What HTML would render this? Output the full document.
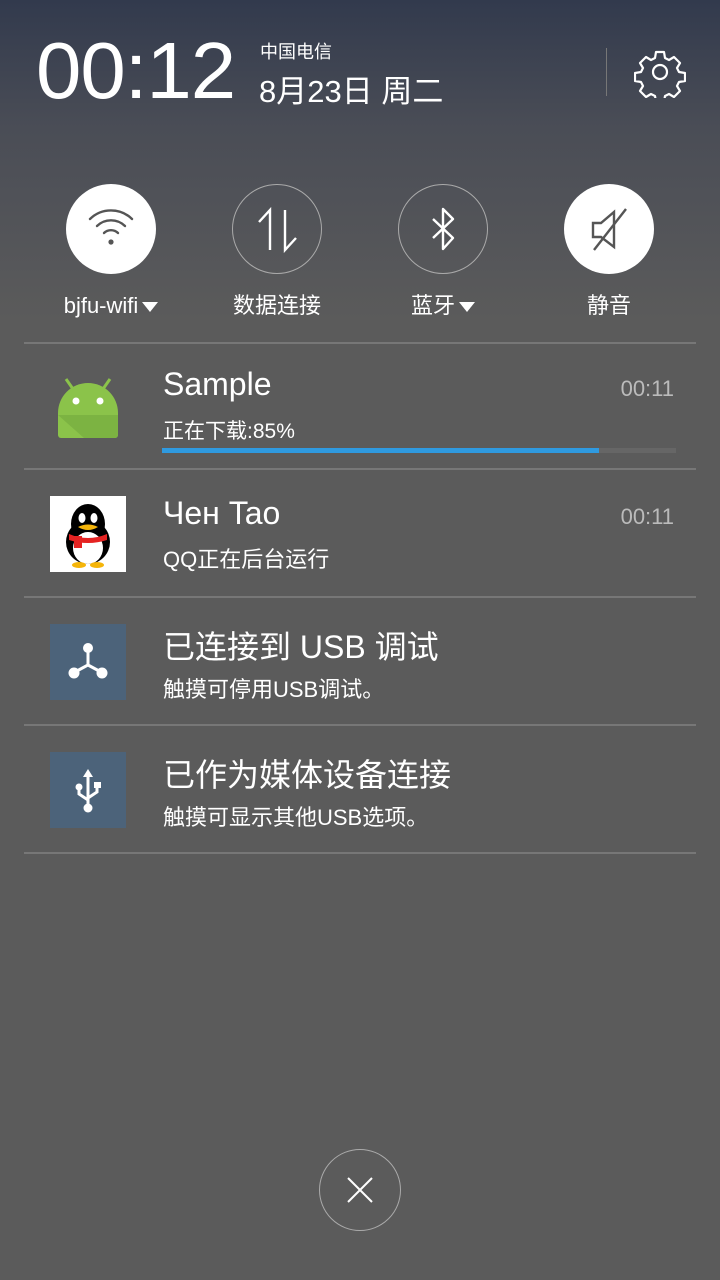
<!DOCTYPE html>
<html><head><meta charset="utf-8"><style>
*{margin:0;padding:0;box-sizing:border-box}
body{width:720px;height:1280px;overflow:hidden;background:#5b5b5b;font-family:"Liberation Sans","Noto Sans CJK SC",sans-serif;color:#fff;position:relative}
.bg{position:absolute;left:0;top:0;width:720px;height:320px;background:linear-gradient(#323a4d 0%,#4a4d56 40%,#5b5b5b 100%)}
.a{position:absolute;white-space:nowrap}
.hr{position:absolute;left:24px;width:672px;height:2px;background:#777}
.circ{position:absolute;width:90px;height:90px;border-radius:50%;top:184px}
.lbl{position:absolute;top:292px;font-size:22px;line-height:28px;text-align:center;width:166px}
.tri{display:inline-block;width:0;height:0;border-left:8px solid transparent;border-right:8px solid transparent;border-top:10px solid #fff;margin-left:4px;vertical-align:middle}
.t{font-size:32px;left:163px}
.s{font-size:22px;left:163px}
.tm{font-size:22px;color:#bbb;right:46px}
</style></head><body>
<div class="bg"></div>
<div class="a" style="left:36px;top:26px;font-size:80px;letter-spacing:-1px;line-height:90px;transform:scaleX(1.02);transform-origin:left">00:12</div>
<div class="a" style="left:260px;top:38px;font-size:18px">中国电信</div>
<div class="a" style="left:259px;top:66px;font-size:31px">8月23日 周二</div>
<div class="a" style="left:606px;top:48px;width:1px;height:48px;background:#777"></div>
<svg class="a" style="left:634px;top:46px" width="52" height="52" viewBox="-2 -2 52 52"><g fill="none" stroke="#fff" stroke-width="2.2" stroke-linejoin="round">
<path d="M20 4h8l1 6 4 2 5-3 6 6-3 5 2 4 6 1v8l-6 1-2 4 3 5-6 6-5-3-4 2-1 6h-8l-1-6-4-2-5 3-6-6 3-5-2-4-6-1v-8l6-1 2-4-3-5 6-6 5 3 4-2z"/><circle cx="24" cy="24" r="7"/></g></svg>

<div class="circ" style="left:66px;background:#fff"></div>
<svg class="a" style="left:87px;top:205px" width="48" height="44" viewBox="0 0 48 44"><g fill="none" stroke="#555" stroke-width="2.4" stroke-linecap="round"><path d="M3 14a30 30 0 0 1 42 0"/><path d="M10 21a20 20 0 0 1 28 0"/><path d="M17 28a10 10 0 0 1 14 0"/></g><circle cx="24" cy="37" r="2.6" fill="#555"/></svg>
<div class="circ" style="left:232px;border:1.5px solid #aaa"></div>
<svg class="a" style="left:255px;top:207px" width="46" height="46" viewBox="0 0 46 46"><g fill="none" stroke="#fff" stroke-width="2.4"><path d="M15 43V3L4 15"/><path d="M30 3v40l11-12"/></g></svg>
<div class="circ" style="left:398px;border:1.5px solid #aaa"></div>
<svg class="a" style="left:421px;top:206px" width="44" height="46" viewBox="0 0 44 46"><path d="M12 13l20 19-10 11V3l10 10-20 19" fill="none" stroke="#fff" stroke-width="2.4" stroke-linejoin="round"/></svg>
<div class="circ" style="left:564px;background:#fff"></div>
<svg class="a" style="left:588px;top:206px" width="46" height="46" viewBox="0 0 46 46"><g fill="none" stroke="#555" stroke-width="2.4"><path d="M5 17h8l13-11v35l-13-10H5z"/><path d="M38 3L6 44"/></g></svg>
<div class="lbl" style="left:28px">bjfu-wifi<span class="tri"></span></div>
<div class="lbl" style="left:194px">数据连接</div>
<div class="lbl" style="left:360px">蓝牙<span class="tri"></span></div>
<div class="lbl" style="left:526px">静音</div>

<div class="hr" style="top:342px"></div>
<svg class="a" style="left:56px;top:373px" width="64" height="66" viewBox="0 0 64 66"><path d="M10 6l7 10M54 6l-7 10" stroke="#8bc34a" stroke-width="3"/><path d="M2 40A30 30 0 0 1 62 40V62a3 3 0 0 1-3 3H5a3 3 0 0 1-3-3z" fill="#8bc34a"/><path d="M2 42h60v20a3 3 0 0 1-3 3H28z" fill="#7cb342"/><circle cx="20" cy="28" r="3.5" fill="#fff"/><circle cx="44" cy="28" r="3.5" fill="#fff"/></svg>
<div class="a t" style="top:366px">Sample</div>
<div class="a tm" style="top:376px">00:11</div>
<div class="a s" style="top:415px;font-size:21px">正在下载:85%</div>
<div class="a" style="left:162px;top:448px;width:514px;height:5px;background:#666"><div style="width:437px;height:5px;background:#2f9ae0"></div></div>

<div class="hr" style="top:468px"></div>
<div class="a" style="left:50px;top:496px;width:76px;height:76px;background:#fff"></div>
<svg class="a" style="left:60px;top:500px" width="56" height="68" viewBox="0 0 56 68"><ellipse cx="28" cy="42" rx="22" ry="22" fill="#000"/><ellipse cx="28" cy="24" rx="17" ry="20" fill="#000"/><ellipse cx="28" cy="48" rx="15" ry="16" fill="#fff"/><ellipse cx="22" cy="18" rx="3.5" ry="5" fill="#fff"/><ellipse cx="34" cy="18" rx="3.5" ry="5" fill="#fff"/><path d="M18 27q10 -5 20 0q-10 6 -20 0z" fill="#f5b50a"/><path d="M9 34q19 8 38 0v6q-19 6 -38 0z" fill="#e52322"/><rect x="14" y="36" width="8" height="12" fill="#e52322"/><ellipse cx="19" cy="65" rx="7" ry="3" fill="#f5b50a"/><ellipse cx="37" cy="65" rx="7" ry="3" fill="#f5b50a"/></svg>
<div class="a t" style="top:495px">Чен Tao</div>
<div class="a tm" style="top:504px">00:11</div>
<div class="a s" style="top:542px">QQ正在后台运行</div>

<div class="hr" style="top:596px"></div>
<div class="a" style="left:50px;top:624px;width:76px;height:76px;background:#4c637a"></div>
<svg class="a" style="left:50px;top:624px" width="76" height="76" viewBox="0 0 76 76"><g stroke="#fff" stroke-width="3" fill="none"><path d="M38 25v16L25 48M38 41l13 7"/></g><circle cx="38" cy="24" r="5" fill="#fff"/><circle cx="24" cy="49" r="5.5" fill="#fff"/><circle cx="52" cy="49" r="5.5" fill="#fff"/></svg>
<div class="a t" style="top:622px">已连接到 USB 调试</div>
<div class="a s" style="top:672px">触摸可停用USB调试。</div>

<div class="hr" style="top:724px"></div>
<div class="a" style="left:50px;top:752px;width:76px;height:76px;background:#4c637a"></div>
<svg class="a" style="left:50px;top:752px" width="76" height="76" viewBox="0 0 76 76"><g stroke="#fff" stroke-width="3" fill="none"><path d="M38 24v32M29 36v6l9 6M47 34v6l-9 6"/></g><path d="M38 17l-5 8h10z" fill="#fff"/><circle cx="29" cy="35" r="3.5" fill="#fff"/><rect x="44" y="30" width="7" height="6" fill="#fff"/><circle cx="38" cy="56" r="4.5" fill="#fff"/></svg>
<div class="a t" style="top:750px">已作为媒体设备连接</div>
<div class="a s" style="top:800px">触摸可显示其他USB选项。</div>
<div class="hr" style="top:852px"></div>

<div class="a" style="left:319px;top:1149px;width:82px;height:82px;border-radius:50%;border:1.5px solid #aaa"></div>
<svg class="a" style="left:345px;top:1175px" width="30" height="30" viewBox="0 0 30 30"><path d="M3 3l24 24M27 3L3 27" stroke="#fff" stroke-width="2"/></svg>
</body></html>
